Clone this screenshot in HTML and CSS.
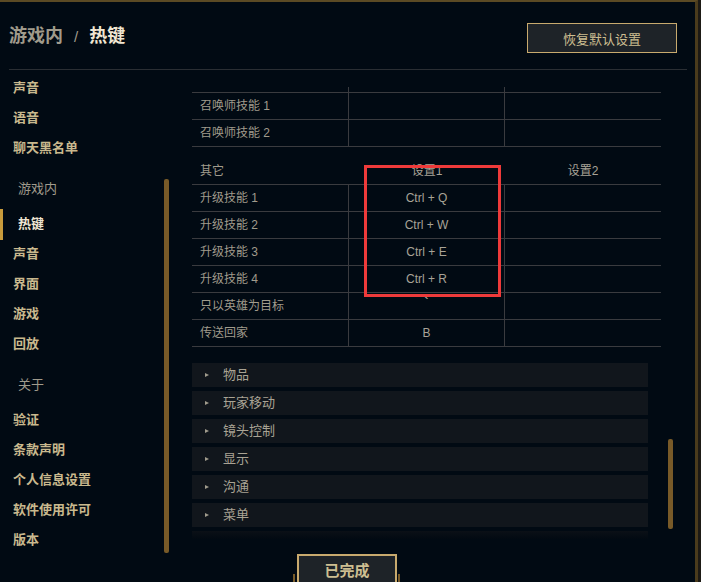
FILE: index.html
```html
<!DOCTYPE html>
<html lang="zh">
<head>
    <meta charset="UTF-8">
    <title>游戏内 / 热键</title>
    <link rel="stylesheet" href="styles.css">
</head>
<body>
<div class="frame">
    <div class="header">
        <h1 class="title"><span class="crumb">游戏内</span><span class="sep">/</span><span class="current">热键</span></h1>
        <button class="btn-reset">恢复默认设置</button>
    </div>

    <div class="main">
        <div class="sidebar">
            <ul class="nav">
                <li class="nav-item">声音</li>
                <li class="nav-item">语音</li>
                <li class="nav-item">聊天黑名单</li>
                <li class="nav-head">游戏内</li>
                <li class="nav-item active">热键</li>
                <li class="nav-item">声音</li>
                <li class="nav-item">界面</li>
                <li class="nav-item">游戏</li>
                <li class="nav-item">回放</li>
                <li class="nav-head">关于</li>
                <li class="nav-item">验证</li>
                <li class="nav-item">条款声明</li>
                <li class="nav-item">个人信息设置</li>
                <li class="nav-item">软件使用许可</li>
                <li class="nav-item">版本</li>
            </ul>
            <div class="thumb thumb-left"></div>
        </div>

        <div class="content">
            <div class="keys">
                <div class="row cut"><div class="cell"></div><div class="cell"></div><div class="cell last"></div></div>
                <div class="row"><div class="cell">召唤师技能 1</div><div class="cell"></div><div class="cell last"></div></div>
                <div class="row"><div class="cell">召唤师技能 2</div><div class="cell"></div><div class="cell last"></div></div>
            </div>

            <div class="keys other">
                <div class="row head"><div class="cell">其它</div><div class="cell key">设置1</div><div class="cell key last">设置2</div></div>
                <div class="row"><div class="cell">升级技能 1</div><div class="cell key">Ctrl + Q</div><div class="cell last"></div></div>
                <div class="row"><div class="cell">升级技能 2</div><div class="cell key">Ctrl + W</div><div class="cell last"></div></div>
                <div class="row"><div class="cell">升级技能 3</div><div class="cell key">Ctrl + E</div><div class="cell last"></div></div>
                <div class="row"><div class="cell">升级技能 4</div><div class="cell key">Ctrl + R</div><div class="cell last"></div></div>
                <div class="row"><div class="cell">只以英雄为目标</div><div class="cell key tick">`</div><div class="cell last"></div></div>
                <div class="row"><div class="cell">传送回家</div><div class="cell key">B</div><div class="cell last"></div></div>
            </div>

            <ul class="groups">
                <li class="group"><span class="arrow"></span>物品</li>
                <li class="group"><span class="arrow"></span>玩家移动</li>
                <li class="group"><span class="arrow"></span>镜头控制</li>
                <li class="group"><span class="arrow"></span>显示</li>
                <li class="group"><span class="arrow"></span>沟通</li>
                <li class="group"><span class="arrow"></span>菜单</li>
                <li class="group fade"></li>
            </ul>
            <div class="thumb thumb-right"></div>
        </div>
    </div>

    <div class="footer">
        <button class="btn-done">已完成</button>
    </div>

    <div class="mark"></div>
</div>
</body>
</html>
```

FILE: styles.css
```css
* {
    box-sizing: border-box;
}
body {
    margin: 0;
    background-color: #1d1a15;
    font-family: "Liberation Sans", "Noto Sans CJK SC", sans-serif;
    width: 701px;
    height: 582px;
    overflow: hidden;
}
.frame {
    position: relative;
    width: 698px;
    height: 582px;
    background-color: #010a13;
    border-top: 2px solid #5b4a24;
    border-right: 3px solid #4a3b1c;
    overflow: hidden;
}

/* header */
.header {
    display: flex;
    justify-content: space-between;
    align-items: flex-start;
    height: 68px;
    margin: 0 8px 0 9px;
    border-bottom: 1px solid #2a2e33;
}
.title {
    margin: 22px 0 0 0;
    font-size: 18px;
    line-height: 24px;
    font-weight: bold;
}
.crumb {
    color: #a09b8c;
}
.sep {
    color: #a09b8c;
    font-weight: normal;
    font-size: 15px;
    margin: 0 11px 0 11px;
}
.current {
    color: #f0e6d2;
}
.btn-reset {
    margin: 21px 10px 0 0;
    width: 150px;
    height: 30px;
    background-color: #1e2328;
    border: 1px solid #c8aa6e;
    color: #cdbe91;
    font-family: "Liberation Sans", "Noto Sans CJK SC", sans-serif;
    font-size: 13px;
    padding: 0;
}

.main {
    display: flex;
    height: 484px;
}

/* left nav */
.sidebar {
    position: relative;
    width: 192px;
    flex-shrink: 0;
}
.nav {
    list-style: none;
    margin: 0;
    padding: 3px 0 0 0;
}
.nav-item {
    position: relative;
    height: 30px;
    line-height: 30px;
    padding-left: 13px;
    font-size: 13px;
    font-weight: bold;
    color: #c9b98e;
}
.nav-item.active {
    color: #f0e6d2;
    padding-left: 18px;
}
.nav-item.active::before {
    content: "";
    position: absolute;
    left: 0;
    top: 0;
    width: 3px;
    height: 31px;
    background-color: #c89b3c;
}
.nav-head {
    height: 30px;
    line-height: 30px;
    margin: 11px 0 5px 0;
    padding-left: 18px;
    font-size: 13px;
    color: #a09b8c;
}
.thumb {
    position: absolute;
    width: 5px;
    background-color: #785a28;
    border-radius: 2px;
}
.thumb-left {
    left: 164px;
    top: 109px;
    height: 374px;
}

/* key table */
.content {
    position: relative;
    flex: 1;
    padding-top: 17px;
}
.keys {
    width: 469px;
}
.row {
    display: grid;
    grid-template-columns: 157px 156px 156px;
    height: 27px;
    border-bottom: 1px solid #3a3b3f;
}
.row.cut {
    height: 6px;
}
.cell {
    border-right: 1px solid #3a3b3f;
    padding-left: 8px;
    font-size: 12px;
    line-height: 26px;
    color: #a09b8c;
    white-space: nowrap;
}
.cell.last {
    border-right: none;
}
.cell.key {
    padding-left: 0;
    text-align: center;
    color: #a8a397;
}
.cell.tick {
    line-height: 20px;
    font-weight: bold;
}
.other {
    margin-top: 11px;
}
.row.head .cell {
    border-right: none;
}

/* collapsed groups */
.groups {
    list-style: none;
    margin: 16px 0 0 0;
    padding: 0;
    width: 456px;
}
.group {
    display: flex;
    align-items: center;
    height: 24px;
    margin-bottom: 4px;
    padding: 0 0 3px 13px;
    background-color: #11161c;
    font-size: 13px;
    color: #a9a394;
}
.arrow {
    width: 0;
    height: 0;
    border-top: 2.5px solid transparent;
    border-bottom: 2.5px solid transparent;
    border-left: 4px solid #a09b8c;
    margin: 3px 14px 0 0;
}
.group.fade {
    height: 8px;
    background: linear-gradient(#0b1016, #020a12);
}
.thumb-right {
    left: 476px;
    top: 369px;
    height: 90px;
}

/* footer */
.footer {
    display: flex;
    justify-content: center;
    padding-right: 1px;
}
.btn-done {
    position: relative;
    width: 100px;
    height: 34px;
    padding: 0 0 4px 0;
    background-color: #1e2328;
    border: 2px solid #c8aa6e;
    color: #cdbe91;
    font-family: "Liberation Sans", "Noto Sans CJK SC", sans-serif;
    font-size: 15px;
    font-weight: bold;
}
.btn-done::before,
.btn-done::after {
    content: "";
    position: absolute;
    top: 18px;
    width: 2px;
    height: 12px;
    background-color: #785a28;
}
.btn-done::before {
    left: -6px;
}
.btn-done::after {
    right: -5px;
}

/* red highlight drawn on the screenshot */
.mark {
    position: absolute;
    left: 364px;
    top: 163px;
    width: 137px;
    height: 132px;
    border: 3px solid #ee3a3a;
}
```
